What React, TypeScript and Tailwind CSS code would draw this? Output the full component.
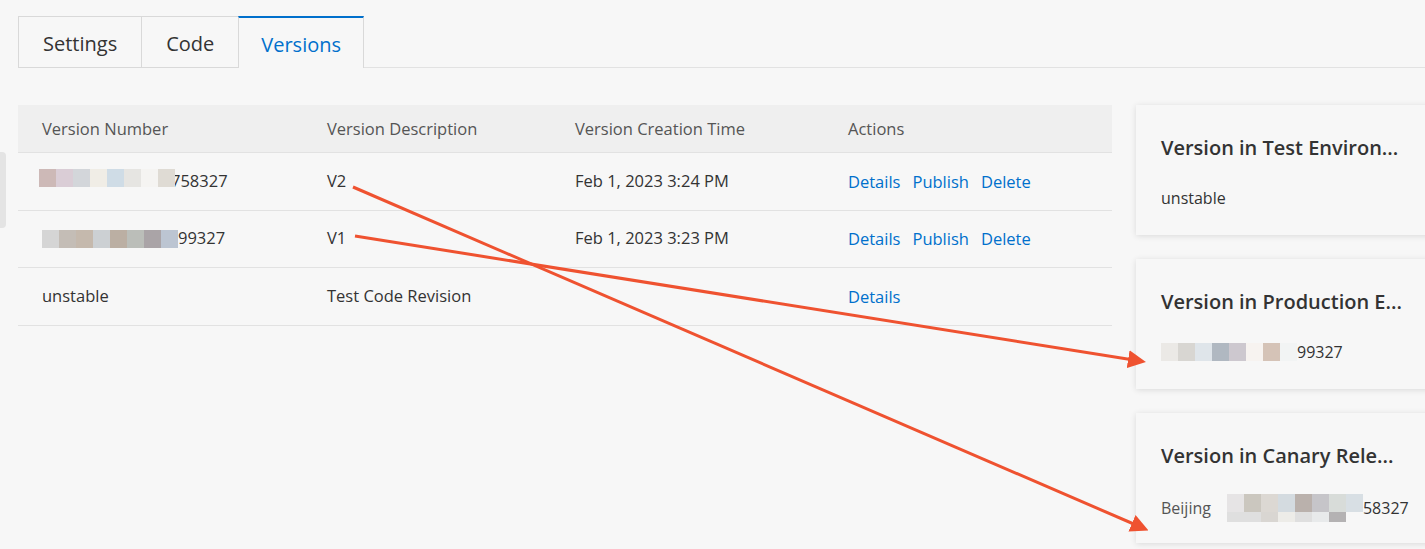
import React from 'react';

const font = { fontFamily: '"Open Sans", "Noto Sans", sans-serif' };

function Mosaic({ colors, cell = 17 }: { colors: string[]; cell?: number }) {
  return (
    <span className="inline-flex h-[18px]">
      {colors.map((c, i) => (
        <span key={i} className="h-full" style={{ width: cell, background: c }} />
      ))}
    </span>
  );
}

const tabs = ['Settings', 'Code', 'Versions'];

const rows = [
  {
    num: (
      <span className="flex items-center">
        <span className="relative z-10 -ml-[3px]">
          <Mosaic colors={['#cdb9b7', '#dacdd6', '#d3d6da', '#f0ede6', '#cfdce6', '#e6e5e2', '#f5f4f2', '#dfdbd4']} />
        </span>
        <span className="-ml-[4px]">758327</span>
      </span>
    ),
    desc: 'V2',
    time: 'Feb 1, 2023 3:24 PM',
    actions: ['Details', 'Publish', 'Delete'],
  },
  {
    num: (
      <span className="flex items-center">
        <Mosaic colors={['#d5d5d5', '#c4bdb6', '#c5b9ad', '#ccd0d3', '#bbafa3', '#bbbeb9', '#aaa4a7', '#bcc5d2']} />
        <span>99327</span>
      </span>
    ),
    desc: 'V1',
    time: 'Feb 1, 2023 3:23 PM',
    actions: ['Details', 'Publish', 'Delete'],
  },
  { num: 'unstable', desc: 'Test Code Revision', time: '', actions: ['Details'] },
];

function Card({ title, children }: { title: string; children: React.ReactNode }) {
  return (
    <div className="h-[130px] w-[300px] bg-[#f7f7f7] pl-[25px] pt-[29px] shadow-[0_1px_6px_rgba(0,0,0,0.12)]">
      <div className="whitespace-nowrap text-[20px] font-semibold leading-[28px] text-[#333]">{title}</div>
      <div className="mt-6 flex items-center text-[16px] leading-6 text-[#333]">{children}</div>
    </div>
  );
}

export default function App() {
  return (
    <div className="relative h-[549px] w-full overflow-hidden bg-[#f7f7f7]" style={font}>
      {/* collapsed sidebar handle */}
      <div className="absolute left-0 top-[152px] h-[76px] w-[6px] rounded-r bg-[#e4e4e4]" />

      {/* tabs */}
      <div className="flex pt-4 pl-[18px]">
        {tabs.map((t) => {
          const active = t === 'Versions';
          return (
            <div
              key={t}
              className={
                active
                  ? 'flex h-[52px] items-center border-x border-t-2 border-[#d9d9d9] border-t-[#0070cc] px-[22px] pt-[3px] text-[20px] text-[#0070cc]'
                  : 'flex h-[52px] items-center border-y border-l border-[#d9d9d9] px-6 pt-[3px] text-[20px] text-[#333]'
              }
            >
              {t}
            </div>
          );
        })}
        <div className="flex-1 border-b border-[#e2e2e2]" />
      </div>

      <div className="mt-[37px] flex gap-6 pl-[18px]">
        {/* table */}
        <div className="w-[1094px] shrink-0 text-[16.5px]">
          <div className="flex h-[48px] items-center border-b border-[#e2e2e2] bg-[#efefef] pl-6 pt-[2px] text-[#555]">
            <div className="w-[285px]">Version Number</div>
            <div className="w-[248px]">Version Description</div>
            <div className="w-[273px]">Version Creation Time</div>
            <div>Actions</div>
          </div>
          {rows.map((r, i) => (
            <div key={i} className="flex h-[57.5px] items-center border-b border-[#e2e2e2] pl-6 text-[#333]">
              <div className="w-[285px]">{r.num}</div>
              <div className="w-[248px]">{r.desc}</div>
              <div className="w-[273px]">{r.time}</div>
              <div className="flex gap-3 pt-[2px] text-[#0070cc]">
                {r.actions.map((a) => (
                  <span key={a}>{a}</span>
                ))}
              </div>
            </div>
          ))}
        </div>

        {/* environment cards */}
        <div className="flex flex-col gap-6">
          <Card title="Version in Test Environ...">unstable</Card>
          <Card title="Version in Production E...">
            <Mosaic colors={['#ebe9e6', '#d8d6d2', '#dfe5ea', '#b0b8c1', '#cdc8cf', '#f7f3f0', '#d5c3b7', '#f2f4f4']} />
            <span>99327</span>
          </Card>
          <Card title="Version in Canary Rele...">
            <span className="mr-4 text-[#555]">Beijing</span>
            <span className="flex flex-col">
              <Mosaic colors={['#e6e4e5', '#cbc7bf', '#dcd8d3', '#d4dbe0', '#bab1ac', '#c6c5c9', '#d8dcd9', '#d8dfe4']} />
              <span className="flex h-[10px]">
                {['#dfdfdf', '#dfdfdf', '#d9d6d2', '#edece8', '#dfdfdf', '#e8eaeb', '#b4b2b3'].map((c, i) => (
                  <span key={i} className="h-full w-[17px]" style={{ background: c }} />
                ))}
              </span>
            </span>
            <span>58327</span>
          </Card>
        </div>
      </div>

      {/* annotation arrows */}
      <svg className="pointer-events-none absolute inset-0" width="1425" height="549">
        <defs>
          <marker id="ah" markerWidth="6" markerHeight="6" refX="4" refY="3" orient="auto" markerUnits="strokeWidth">
            <path d="M0,0 L6,3 L0,6 z" fill="#ef5230" />
          </marker>
        </defs>
        <line x1="353" y1="187" x2="1143" y2="528" stroke="#ef5230" strokeWidth="3" markerEnd="url(#ah)" />
        <line x1="355" y1="236" x2="1140" y2="361" stroke="#ef5230" strokeWidth="3" markerEnd="url(#ah)" />
      </svg>
    </div>
  );
}
